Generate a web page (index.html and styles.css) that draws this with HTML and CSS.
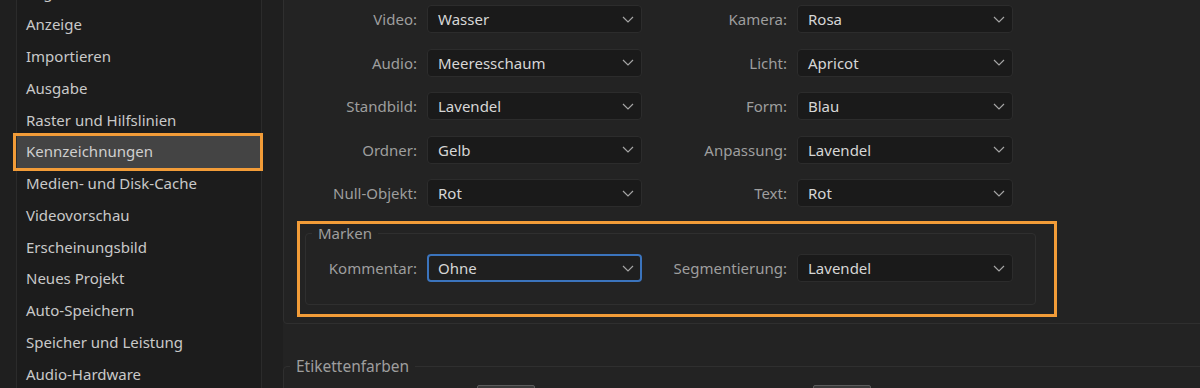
FILE: index.html
```html
<!DOCTYPE html>
<html lang="de">
<head>
<meta charset="utf-8">
<title>Voreinstellungen – Kennzeichnungen</title>
<link rel="stylesheet" href="styles.css">
</head>
<body>
<div class="app">
  <aside class="sidebar">
    <ul class="nav">
      <li>Allgemein</li>
      <li>Anzeige</li>
      <li>Importieren</li>
      <li>Ausgabe</li>
      <li>Raster und Hilfslinien</li>
      <li class="active">Kennzeichnungen</li>
      <li>Medien- und Disk-Cache</li>
      <li>Videovorschau</li>
      <li>Erscheinungsbild</li>
      <li>Neues Projekt</li>
      <li>Auto-Speichern</li>
      <li>Speicher und Leistung</li>
      <li>Audio-Hardware</li>
    </ul>
  </aside>
  <main class="content">
    <section class="panel">
      <div class="grid">
        <label class="lbl">Video:</label>
        <div class="select"><span>Wasser</span><svg class="chev" viewBox="0 0 12 7"><path d="M1 1 L6 6 L11 1"/></svg></div>
        <label class="lbl">Kamera:</label>
        <div class="select"><span>Rosa</span><svg class="chev" viewBox="0 0 12 7"><path d="M1 1 L6 6 L11 1"/></svg></div>

        <label class="lbl">Audio:</label>
        <div class="select"><span>Meeresschaum</span><svg class="chev" viewBox="0 0 12 7"><path d="M1 1 L6 6 L11 1"/></svg></div>
        <label class="lbl">Licht:</label>
        <div class="select"><span>Apricot</span><svg class="chev" viewBox="0 0 12 7"><path d="M1 1 L6 6 L11 1"/></svg></div>

        <label class="lbl">Standbild:</label>
        <div class="select"><span>Lavendel</span><svg class="chev" viewBox="0 0 12 7"><path d="M1 1 L6 6 L11 1"/></svg></div>
        <label class="lbl">Form:</label>
        <div class="select"><span>Blau</span><svg class="chev" viewBox="0 0 12 7"><path d="M1 1 L6 6 L11 1"/></svg></div>

        <label class="lbl">Ordner:</label>
        <div class="select"><span>Gelb</span><svg class="chev" viewBox="0 0 12 7"><path d="M1 1 L6 6 L11 1"/></svg></div>
        <label class="lbl">Anpassung:</label>
        <div class="select"><span>Lavendel</span><svg class="chev" viewBox="0 0 12 7"><path d="M1 1 L6 6 L11 1"/></svg></div>

        <label class="lbl">Null-Objekt:</label>
        <div class="select"><span>Rot</span><svg class="chev" viewBox="0 0 12 7"><path d="M1 1 L6 6 L11 1"/></svg></div>
        <label class="lbl">Text:</label>
        <div class="select"><span>Rot</span><svg class="chev" viewBox="0 0 12 7"><path d="M1 1 L6 6 L11 1"/></svg></div>
      </div>

      <div class="highlight">
        <fieldset class="group">
          <legend>Marken</legend>
          <div class="grid grid-inner">
            <label class="lbl">Kommentar:</label>
            <div class="select focus"><span>Ohne</span><svg class="chev" viewBox="0 0 12 7"><path d="M1 1 L6 6 L11 1"/></svg></div>
            <label class="lbl">Segmentierung:</label>
            <div class="select"><span>Lavendel</span><svg class="chev" viewBox="0 0 12 7"><path d="M1 1 L6 6 L11 1"/></svg></div>
          </div>
        </fieldset>
      </div>
    </section>

    <fieldset class="panel2">
      <legend>Etikettenfarben</legend>
      <div class="swatches">
        <div class="swatch"></div>
        <div class="swatch"></div>
      </div>
    </fieldset>
  </main>
</div>
</body>
</html>
```

FILE: styles.css
```css
* { box-sizing: border-box; }

html, body {
  margin: 0;
  padding: 0;
  width: 1200px;
  height: 388px;
  overflow: hidden;
  background: #1f1f1f;
  font-family: "Noto Sans", "Open Sans", sans-serif;
  font-size: 15px;
}

.app {
  display: flex;
  align-items: flex-start;
  padding-left: 16px;
  height: 388px;
  overflow: hidden;
}

/* ---------- sidebar ---------- */
.sidebar {
  flex: 0 0 246px;
  height: 408px;
  margin-top: -20px;
  background: #1c1c1c;
  border-left: 1px solid #2b2b2b;
  border-right: 1px solid #2b2b2b;
}

.nav {
  list-style: none;
  margin: -2.7px 0 0 0;
  padding: 0;
}

.nav li {
  position: relative;
  height: 31.8px;
  line-height: 31.8px;
  padding-left: 9px;
  color: #c9c9c9;
  white-space: nowrap;
}

.nav li.active {
  background: #444444;
  color: #cfcfcf;
}

.nav li.active::after {
  content: "";
  position: absolute;
  inset: -3px -2px -3px -4px;
  border: 3px solid #f29c38;
  pointer-events: none;
}

/* ---------- content ---------- */
.content {
  flex: 0 0 940px;
  margin-left: 21px;
  background: #232323;
  height: 388px;
  overflow: hidden;
}

.panel {
  margin-top: -20px;
  border: 1px solid #2f2f2f;
  border-radius: 4px;
  padding: 24px 0 6px 0;
}

.grid {
  display: grid;
  grid-template-columns: 133px 215px 135px 216px;
  column-gap: 10px;
  row-gap: 15.5px;
  align-items: center;
}

.grid-inner {
  grid-template-columns: 111px 215px 135px 216px;
}

.lbl {
  text-align: right;
  color: #9e9e9e;
  white-space: nowrap;
}

.select {
  height: 28px;
  display: flex;
  align-items: center;
  justify-content: space-between;
  padding: 0 7px 0 10px;
  background: #1a1a1a;
  border: 1px solid #2c2c2c;
  border-radius: 4px;
  color: #d6d6d6;
}

.select.focus {
  background: #1f1f1f;
  border: 2px solid #3b74bd;
  padding-left: 9px;
  padding-right: 6px;
}

.chev {
  width: 12px;
  height: 7px;
  fill: none;
  stroke: #a5a5a5;
  stroke-width: 1.2;
}

/* ---------- highlighted group ---------- */
.highlight {
  margin: 14px 0 0 13px;
  width: 760px;
  border: 3px solid #f29c38;
  padding: 0 0 9px 5px;
}

.group {
  margin: 0;
  width: 731px;
  padding: 12px 0 22px 0;
  border: 1px solid #2f2f2f;
  border-radius: 4px;
}

.group legend {
  margin-left: 6px;
  padding: 0 6px;
  line-height: 18px;
  color: #9e9e9e;
}

/* ---------- Etikettenfarben ---------- */
.panel2 {
  margin: 32px 0 0 0;
  padding: 9px 0 20px 0;
  border: 1px solid #2f2f2f;
  border-radius: 4px;
}

.panel2 legend {
  margin-left: 6px;
  padding: 0 6px;
  line-height: 20px;
  font-size: 15.5px;
  color: #9e9e9e;
}

.swatches {
  display: flex;
  gap: 278px;
  padding-left: 193px;
}

.swatch {
  width: 58px;
  height: 20px;
  background: #3a3a3a;
  border: 1px solid #5c5c5c;
  border-radius: 2px;
}
```
